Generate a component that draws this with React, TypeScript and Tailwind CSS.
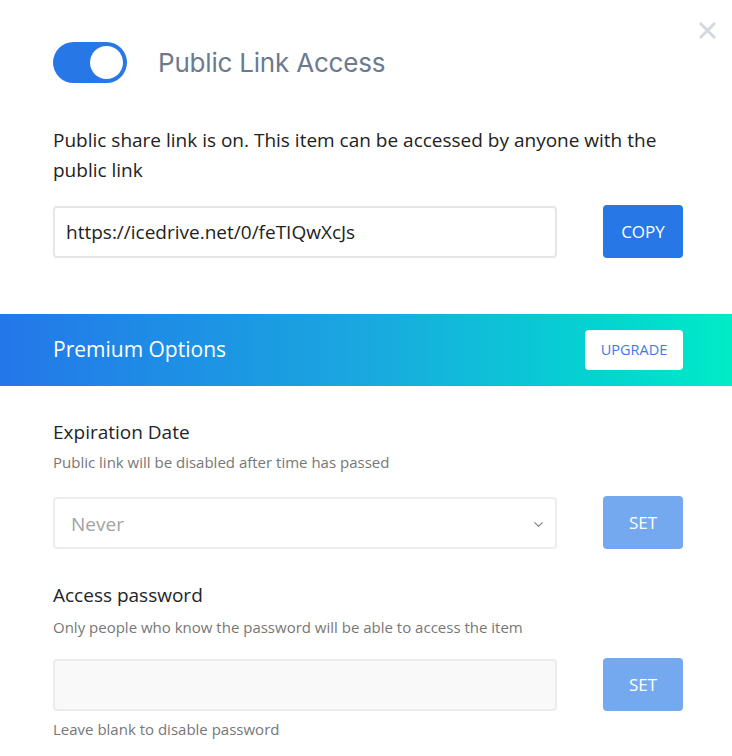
import React, { useState } from 'react';
import { X, ChevronDown } from 'lucide-react';

const body = { fontFamily: '"Open Sans", "Noto Sans", sans-serif' };

const Toggle = ({ on, onChange }: { on: boolean; onChange: (v: boolean) => void }) => (
    <button
        onClick={() => onChange(!on)}
        className={`relative w-[74px] h-[41px] rounded-full shrink-0 transition-colors ${on ? 'bg-[#2778e6]' : 'bg-[#cfd6df]'}`}
    >
        <span
            className={`absolute top-[4px] w-[33px] h-[33px] rounded-full bg-white transition-all ${on ? 'left-[37px]' : 'left-[4px]'}`}
        />
    </button>
);

export default function App() {
    const [isPublic, setIsPublic] = useState(true);

    return (
        <div className="relative w-[732px] h-[756px] bg-white overflow-hidden text-[#212529]" style={body}>
            <button className="absolute top-[17px] right-[11px] text-[#d3d8df]">
                <X size={27} strokeWidth={2.5} />
            </button>

            <div className="pl-[53px] pr-[49px] pt-[42px]">
                <div className="flex items-center gap-[31px]">
                    <Toggle on={isPublic} onChange={setIsPublic} />
                    <h2 className="text-[26px] text-[#6c7a8f] tracking-[-0.2px]" style={{ fontFamily: 'Inter, "Noto Sans", sans-serif' }}>
                        Public Link Access
                    </h2>
                </div>

                <p className="mt-[42px] text-[19px] leading-[30px] text-[#222] pr-[20px]">
                    Public share link is on. This item can be accessed by anyone with the public link
                </p>

                <div className="mt-[20px] flex items-center justify-between">
                    <input
                        readOnly
                        value="https://icedrive.net/0/feTIQwXcJs"
                        className="w-[504px] h-[52px] border-2 border-[#e6e6e6] rounded-[4px] px-[11px] text-[19px] text-[#222] outline-none"
                    />
                    <button className="w-[80px] h-[53px] rounded-[4px] bg-[#2778e6] text-white text-[17px]">
                        COPY
                    </button>
                </div>
            </div>

            <div className="mt-[56px] h-[72px] flex items-center justify-between pl-[53px] pr-[49px] bg-gradient-to-r from-[#2576e9] via-[#1aa8df] to-[#00ecc6]">
                <span className="text-white text-[21px]">Premium Options</span>
                <button className="w-[98px] h-[40px] bg-white rounded-[4px] text-[#3b7be6] text-[14.5px]">
                    UPGRADE
                </button>
            </div>

            <div className="pl-[53px] pr-[49px]">
                <h3 className="mt-[33px] text-[19px] leading-[26px]">Expiration Date</h3>
                <p className="mt-[7px] text-[15px] leading-[20px] text-[#777]">Public link will be disabled after time has passed</p>
                <div className="mt-[24px] flex items-center justify-between">
                    <div className="relative w-[504px] h-[52px] border-2 border-[#ededed] rounded-[4px] flex items-center px-[16px] pt-[3px] text-[19px] text-[#a3a3a3]">
                        Never
                        <ChevronDown size={15} className="absolute right-[9px] text-[#888]" />
                    </div>
                    <button className="w-[80px] h-[53px] rounded-[4px] bg-[#74a9f0] text-white text-[17px]">SET</button>
                </div>

                <h3 className="mt-[33px] text-[19px] leading-[26px]">Access password</h3>
                <p className="mt-[9px] text-[15px] leading-[20px] text-[#777]">Only people who know the password will be able to access the item</p>
                <div className="mt-[21px] flex items-center justify-between">
                    <input
                        type="password"
                        className="w-[504px] h-[52px] border-2 border-[#ececec] bg-[#f9f9f9] rounded-[4px] px-[11px] outline-none"
                    />
                    <button className="w-[80px] h-[53px] rounded-[4px] bg-[#74a9f0] text-white text-[17px]">SET</button>
                </div>
                <p className="mt-[8px] text-[15px] leading-[20px] text-[#777]">Leave blank to disable password</p>
            </div>
        </div>
    );
}
